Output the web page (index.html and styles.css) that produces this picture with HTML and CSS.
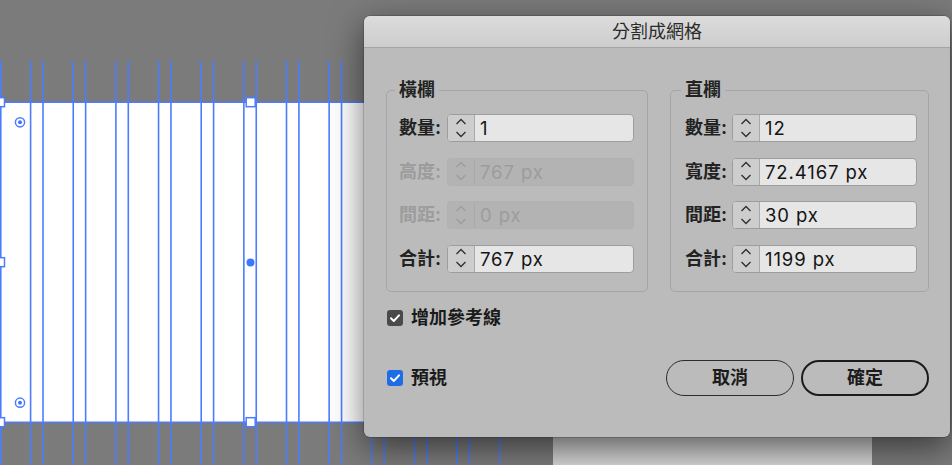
FILE: index.html
```html
<!DOCTYPE html>
<html lang="zh-Hant">
<head>
<meta charset="utf-8">
<title>分割成網格</title>
<link rel="stylesheet" href="styles.css">
</head>
<body>
<div class="canvas">
  <svg class="art" width="952" height="465" viewBox="0 0 952 465">
    <rect x="0" y="102" width="500" height="320" fill="#ffffff"/>
    <g stroke="#4b7dfc" stroke-width="1.6">
      <line x1="0.8" y1="61" x2="0.8" y2="465"/>
      <line x1="30.6" y1="61" x2="30.6" y2="465"/>
      <line x1="43" y1="61" x2="43" y2="465"/>
      <line x1="73.25" y1="61" x2="73.25" y2="465"/>
      <line x1="85.65" y1="61" x2="85.65" y2="465"/>
      <line x1="115.9" y1="61" x2="115.9" y2="465"/>
      <line x1="128.3" y1="61" x2="128.3" y2="465"/>
      <line x1="158.55" y1="61" x2="158.55" y2="465"/>
      <line x1="170.95" y1="61" x2="170.95" y2="465"/>
      <line x1="201.2" y1="61" x2="201.2" y2="465"/>
      <line x1="213.6" y1="61" x2="213.6" y2="465"/>
      <line x1="243.85" y1="61" x2="243.85" y2="465"/>
      <line x1="256.25" y1="61" x2="256.25" y2="465"/>
      <line x1="286.5" y1="61" x2="286.5" y2="465"/>
      <line x1="298.9" y1="61" x2="298.9" y2="465"/>
      <line x1="329.15" y1="61" x2="329.15" y2="465"/>
      <line x1="341.55" y1="61" x2="341.55" y2="465"/>
      <line x1="371.8" y1="61" x2="371.8" y2="465"/>
      <line x1="384.2" y1="61" x2="384.2" y2="465"/>
      <line x1="414.45" y1="61" x2="414.45" y2="465"/>
      <line x1="426.85" y1="61" x2="426.85" y2="465"/>
      <line x1="457.1" y1="61" x2="457.1" y2="465"/>
      <line x1="469.5" y1="61" x2="469.5" y2="465"/>
      <line x1="499.75" y1="61" x2="499.75" y2="465"/>
      <line x1="0" y1="102.2" x2="500" y2="102.2"/>
      <line x1="0" y1="422.2" x2="500" y2="422.2"/>
    </g>
    <g fill="#ffffff" stroke="#4b7dfc" stroke-width="1.5">
      <rect x="-4.5" y="97.7" width="9" height="9"/>
      <rect x="246.2" y="97.7" width="9" height="9"/>
      <rect x="-4.5" y="257.7" width="9" height="9"/>
      <rect x="-4.5" y="417.7" width="9" height="9"/>
      <rect x="246.2" y="417.7" width="9" height="9"/>
    </g>
    <circle cx="250.5" cy="262.5" r="4" fill="#3f76ff"/>
    <g stroke="#4b7dfc" stroke-width="1.5" fill="none">
      <circle cx="20" cy="122.3" r="4.6"/>
      <circle cx="20" cy="402.7" r="4.6"/>
    </g>
    <g fill="#3f76ff">
      <circle cx="20" cy="122.3" r="2"/>
      <circle cx="20" cy="402.7" r="2"/>
    </g>
  </svg>

  <div class="back-panel"></div>

  <div class="dialog">
    <div class="titlebar">分割成網格</div>
    <div class="dialog-body">
      <div class="groups">
        <fieldset class="group group-left">
          <legend>橫欄</legend>
          <div class="row">
            <span class="label">數量:</span>
            <div class="field">
              <span class="stepper"><svg width="12" height="28" viewBox="0 0 12 28"><path d="M1.5 10 L6 5.5 L10.5 10 M1.5 18 L6 22.5 L10.5 18" fill="none" stroke="#2e2e2e" stroke-width="1.3"/></svg></span>
              <span class="value">1</span>
            </div>
          </div>
          <div class="row disabled">
            <span class="label">高度:</span>
            <div class="field">
              <span class="stepper"><svg width="12" height="28" viewBox="0 0 12 28"><path d="M1.5 10 L6 5.5 L10.5 10 M1.5 18 L6 22.5 L10.5 18" fill="none" stroke="#9d9d9d" stroke-width="1.3"/></svg></span>
              <span class="value">767 px</span>
            </div>
          </div>
          <div class="row disabled">
            <span class="label">間距:</span>
            <div class="field">
              <span class="stepper"><svg width="12" height="28" viewBox="0 0 12 28"><path d="M1.5 10 L6 5.5 L10.5 10 M1.5 18 L6 22.5 L10.5 18" fill="none" stroke="#9d9d9d" stroke-width="1.3"/></svg></span>
              <span class="value">0 px</span>
            </div>
          </div>
          <div class="row">
            <span class="label">合計:</span>
            <div class="field">
              <span class="stepper"><svg width="12" height="28" viewBox="0 0 12 28"><path d="M1.5 10 L6 5.5 L10.5 10 M1.5 18 L6 22.5 L10.5 18" fill="none" stroke="#2e2e2e" stroke-width="1.3"/></svg></span>
              <span class="value">767 px</span>
            </div>
          </div>
        </fieldset>

        <fieldset class="group group-right">
          <legend>直欄</legend>
          <div class="row">
            <span class="label">數量:</span>
            <div class="field">
              <span class="stepper"><svg width="12" height="28" viewBox="0 0 12 28"><path d="M1.5 10 L6 5.5 L10.5 10 M1.5 18 L6 22.5 L10.5 18" fill="none" stroke="#2e2e2e" stroke-width="1.3"/></svg></span>
              <span class="value">12</span>
            </div>
          </div>
          <div class="row">
            <span class="label">寬度:</span>
            <div class="field">
              <span class="stepper"><svg width="12" height="28" viewBox="0 0 12 28"><path d="M1.5 10 L6 5.5 L10.5 10 M1.5 18 L6 22.5 L10.5 18" fill="none" stroke="#2e2e2e" stroke-width="1.3"/></svg></span>
              <span class="value">72.4167 px</span>
            </div>
          </div>
          <div class="row">
            <span class="label">間距:</span>
            <div class="field">
              <span class="stepper"><svg width="12" height="28" viewBox="0 0 12 28"><path d="M1.5 10 L6 5.5 L10.5 10 M1.5 18 L6 22.5 L10.5 18" fill="none" stroke="#2e2e2e" stroke-width="1.3"/></svg></span>
              <span class="value">30 px</span>
            </div>
          </div>
          <div class="row">
            <span class="label">合計:</span>
            <div class="field">
              <span class="stepper"><svg width="12" height="28" viewBox="0 0 12 28"><path d="M1.5 10 L6 5.5 L10.5 10 M1.5 18 L6 22.5 L10.5 18" fill="none" stroke="#2e2e2e" stroke-width="1.3"/></svg></span>
              <span class="value">1199 px</span>
            </div>
          </div>
        </fieldset>
      </div>

      <div class="check-row">
        <span class="cb cb-dark"><svg width="16" height="16" viewBox="0 0 16 16"><path d="M4 8.3 L6.8 11 L12 5.3" fill="none" stroke="#ffffff" stroke-width="2" stroke-linecap="round" stroke-linejoin="round"/></svg></span>
        <span class="cb-label">增加參考線</span>
      </div>

      <div class="footer">
        <div class="check-row preview">
          <span class="cb cb-blue"><svg width="16" height="16" viewBox="0 0 16 16"><path d="M4 8.3 L6.8 11 L12 5.3" fill="none" stroke="#ffffff" stroke-width="2" stroke-linecap="round" stroke-linejoin="round"/></svg></span>
          <span class="cb-label">預視</span>
        </div>
        <div class="buttons">
          <button class="btn">取消</button>
          <button class="btn btn-primary">確定</button>
        </div>
      </div>
    </div>
  </div>
</div>
</body>
</html>
```

FILE: styles.css
```css
html, body {
  margin: 0;
  padding: 0;
}

body {
  width: 952px;
  height: 465px;
  overflow: hidden;
  background: #7b7b7b;
  font-family: "Inter", "Noto Sans CJK TC", sans-serif;
  color: #1c1c1c;
}

.canvas {
  position: relative;
  width: 952px;
  height: 465px;
  overflow: hidden;
  background: #7b7b7b;
}

.art {
  position: absolute;
  left: 0;
  top: 0;
  display: block;
}

.back-panel {
  position: absolute;
  left: 553px;
  top: 420px;
  width: 319px;
  height: 45px;
  background: linear-gradient(#bdbdbd, #d6d6d6);
}

.dialog {
  position: absolute;
  left: 364px;
  top: 16px;
  width: 586px;
  height: 421px;
  border-radius: 6px;
  background: #bbbbbb;
  overflow: hidden;
  box-shadow: 0 10px 34px rgba(0, 0, 0, 0.55), 0 0 0 0.5px rgba(0, 0, 0, 0.3);
}

.titlebar {
  height: 32px;
  box-sizing: border-box;
  padding-top: 1px;
  border-bottom: 1px solid #a4a4a4;
  background: linear-gradient(#dcdcdc, #cdcdcd);
  display: flex;
  align-items: center;
  justify-content: center;
  font-size: 18px;
  line-height: 22px;
  color: #2a2a2a;
}

.dialog-body {
  padding: 31px 21px 0 22px;
}

.groups {
  display: grid;
  grid-template-columns: 262px 259px;
  column-gap: 22px;
}

.group {
  margin: 0;
  min-width: 0;
  border: 1px solid #a5a5a5;
  border-radius: 5px;
  padding: 13px 13px 18px 12px;
}

.group-right {
  padding-left: 14px;
  padding-right: 11px;
}

.group legend {
  padding: 0 4px;
  margin-left: -4px;
  font-size: 18px;
  line-height: 22px;
  font-weight: 700;
  color: #222222;
}

.row {
  display: flex;
  align-items: center;
  height: 28px;
}

.row + .row {
  margin-top: 15.5px;
}

.label {
  width: 48px;
  flex: none;
  font-size: 18px;
  line-height: 22px;
  font-weight: 700;
  color: #222222;
  white-space: nowrap;
}

.group-right .label {
  width: 47px;
}

.field {
  flex: 1;
  display: flex;
  height: 28px;
  box-sizing: border-box;
  border: 1px solid #9d9d9d;
  border-radius: 4px;
  background: #e6e6e6;
  overflow: hidden;
}

.stepper {
  width: 26px;
  flex: none;
  display: flex;
  align-items: center;
  justify-content: center;
  background: #cdcdcd;
  border-right: 1px solid #a9a9a9;
}

.stepper svg {
  display: block;
  margin-top: -1px;
}

.value {
  padding-left: 5px;
  font-size: 18.5px;
  line-height: 26px;
  letter-spacing: 0.9px;
  color: #141414;
  white-space: nowrap;
}

.row.disabled .label,
.row.disabled .value {
  color: #9c9c9c;
}

.row.disabled .field {
  background: #b3b3b3;
  border-color: #b1b1b1;
}

.row.disabled .stepper {
  background: #b3b3b3;
  border-right-color: #a9a9a9;
}

.check-row {
  display: flex;
  align-items: center;
  gap: 8px;
  height: 22px;
  margin-top: 15.5px;
  margin-left: 1px;
}

.cb {
  width: 16px;
  height: 16px;
  flex: none;
  border-radius: 3px;
  display: flex;
  align-items: center;
  justify-content: center;
}

.cb svg {
  display: block;
}

.cb-dark {
  background: #4a4a4a;
}

.cb-blue {
  background: #1e6de6;
}

.cb-label {
  font-size: 18px;
  line-height: 22px;
  font-weight: 700;
  color: #1a1a1a;
}

.footer {
  display: flex;
  align-items: center;
  justify-content: space-between;
  margin-top: 30.5px;
  height: 36px;
}

.check-row.preview {
  margin-top: 0;
}

.buttons {
  display: flex;
  gap: 7px;
}

.btn {
  width: 128px;
  height: 36px;
  box-sizing: border-box;
  border: 1.5px solid #2b2b2b;
  border-radius: 18px;
  background: transparent;
  font-family: "Inter", "Noto Sans CJK TC", sans-serif;
  font-size: 18px;
  font-weight: 700;
  color: #1c1c1c;
  padding: 0;
  line-height: 22px;
}

.btn-primary {
  border: 2.5px solid #1c1c1c;
}
```
